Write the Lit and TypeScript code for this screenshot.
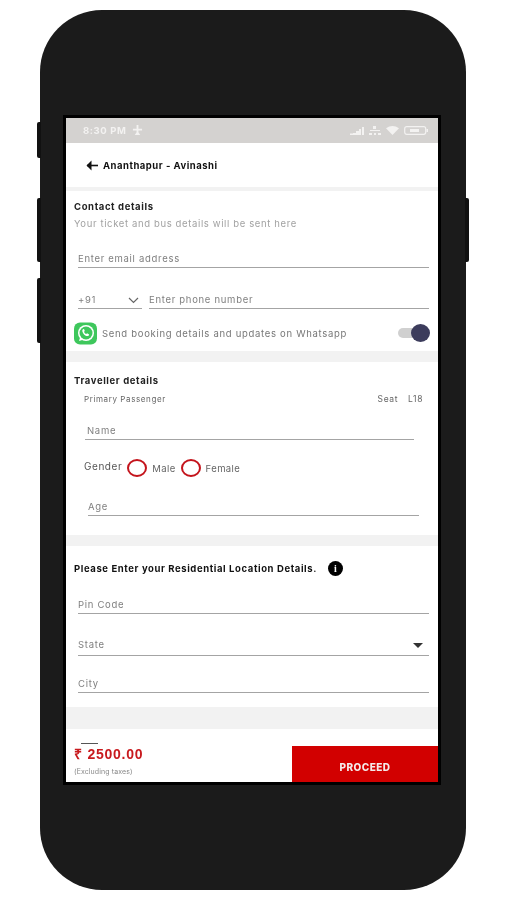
import { LitElement, html, css } from "lit";
import { customElement } from "lit/decorators.js";

@customElement("app-root")
export class AppRoot extends LitElement {
  static styles = css`
    :host { display: block; width: 506px; height: 900px; background: #fff; padding-top: 10px; box-sizing: border-box; font-family: Inter, "Open Sans", "Liberation Sans", sans-serif; overflow: hidden; }
    * { box-sizing: border-box; }
    .phone { position: relative; width: 426px; height: 880px; margin-left: 40px; background: #1b1b1b; border-radius: 62px; padding: 105px 25px 105px 23px; filter: blur(0.5px); }
    .btn { position: absolute; width: 4px; background: #111; }
    .l1 { left: -3px; top: 112px; height: 36px; border-radius: 2px 0 0 2px; }
    .l2 { left: -3px; top: 188px; height: 64px; border-radius: 2px 0 0 2px; }
    .l3 { left: -3px; top: 268px; height: 65px; border-radius: 2px 0 0 2px; }
    .r1 { right: -3px; top: 188px; height: 64px; border-radius: 0 2px 2px 0; }
    .screen { width: 378px; height: 670px; border: 3px solid #000; background: #f2f2f2; display: flex; flex-direction: column; overflow: hidden; }
    .status { height: 25px; background: #d4d2d0; display: flex; align-items: center; padding: 0 10px 0 17px; color: #f3f2f1; font-size: 9.5px; font-weight: 700; flex: none; }
    .status .time { margin-right: 6px; letter-spacing: .6px; }
    .status .right { margin-left: auto; display: flex; align-items: center; gap: 5px; }
    .head { height: 44px; background: #fff; display: flex; align-items: center; padding-left: 20px; gap: 5px; font-size: 9.5px; font-weight: 700; color: #111; flex: none; margin-bottom: 4px; letter-spacing: .5px; }
    .sec { background: #fff; flex: none; padding-left: 8px; }
    .contact { height: 160px; margin-bottom: 11px; padding-top: 9px; }
    .traveller { height: 173px; margin-bottom: 11px; padding-top: 12px; }
    .resid { height: 161px; margin-bottom: 22px; padding-top: 14px; }
    h3 { margin: 0; font-size: 9.5px; line-height: 14px; font-weight: 700; color: #222; letter-spacing: .62px; }
    .sub { font-size: 9.5px; line-height: 14px; color: #a2a2a2; margin-top: 3px; letter-spacing: .63px; }
    .field { height: 17px; border-bottom: 1px solid #a4a4a4; font-size: 9.5px; line-height: 14px; color: #7f7f7f; letter-spacing: .7px; display: flex; justify-content: space-between; align-items: flex-start; padding-top: 1px; }
    .email { margin: 20px 9px 0 4px; }
    .phone-row { display: flex; gap: 7px; margin: 24px 9px 0 4px; }
    .code { width: 64px; padding-right: 3px; }
    .grow { flex: 1; }
    .wa { display: flex; align-items: center; margin-top: 12px; height: 24px; padding-right: 8px; font-size: 9.5px; color: #777; letter-spacing: .7px; }
    .wa span { margin-left: 5px; }
    .toggle { position: relative; margin-left: auto; width: 32px; height: 16px; }
    .track { position: absolute; left: 0; top: 3px; width: 24px; height: 10px; border-radius: 5px; background: #d0d0d0; }
    .knob { position: absolute; right: 0; top: -1px; border-radius: 50%; background: #3c3c5c; width: 19px; height: 18px; }
    .pp { display: flex; padding: 5px 15px 0 10px; font-size: 8px; line-height: 12px; color: #666; letter-spacing: .6px; }
    .pp .seat { margin-left: auto; margin-right: 10px; font-size: 8.5px; }
    .pp .no { font-size: 8.5px; }
    .name { margin: 18px 24px 0 11px; padding-left: 2px; }
    .gender { display: flex; align-items: center; margin: 16px 0 0 10px; height: 24px; font-size: 9.5px; color: #666; letter-spacing: .4px; }
    .gender b { font-weight: 400; margin: -4px 5px 0 0; color: #555; font-size: 10px; letter-spacing: .55px; }
    .radio { width: 20px; height: 18px; border: 2px solid #c4141c; border-radius: 50%; margin-right: 5px; }
    .gender .m { margin-right: 5px; }
    .age { margin: 19px 19px 0 14px; }
    .rt { display: flex; align-items: center; height: 16px; font-size: 9.5px; font-weight: 700; color: #111; letter-spacing: .6px; }
    .info { width: 15px; height: 15px; border-radius: 50%; background: #000; color: #fff; font-size: 10px; font-weight: 700; line-height: 15px; text-align: center; margin-left: 11px; font-family: "Liberation Serif", serif; letter-spacing: 0; }
    .pin { margin: 21px 9px 0 4px; }
    .state { margin: 23px 9px 0 4px; height: 19px; padding-right: 6px; }
    .caret { width: 0; height: 0; margin-top: 5px; border: 5px solid transparent; border-top: 5px solid #333; border-bottom: 0; }
    .city { margin: 20px 9px 0 4px; }
    .foot { flex: 1; background: #fff; display: flex; justify-content: space-between; align-items: flex-end; padding-left: 8px; }
    .price { align-self: stretch; padding-top: 14px; }
    .dash { width: 17px; height: 1px; background: #555; margin-left: 7px; }
    .amt { color: #c81a1e; font-size: 14px; line-height: 18px; font-weight: 700; letter-spacing: .75px; margin-top: 1px; font-family: "Liberation Sans", sans-serif; }
    .tax { font-size: 7px; line-height: 10px; color: #888; margin-top: 4px; letter-spacing: .1px; }
    .cta { width: 146px; height: 36px; background: #d20000; color: #f4eaea; font-size: 10px; font-weight: 800; display: flex; align-items: flex-end; justify-content: center; padding-bottom: 9px; letter-spacing: .45px; }
  `;

  render() {
    return html`
      <div class="phone">
        <i class="btn l1"></i><i class="btn l2"></i><i class="btn l3"></i><i class="btn r1"></i>
        <div class="screen">
          <div class="status">
            <span class="time">8:30 PM</span>
            <svg width="11" height="11" viewBox="0 0 12 12" fill="#f3f2f1"><path d="M5 0h2v4h4v2H7v2l2 3H3l2-3V6H1V4h4z"/></svg>
            <div class="right">
              <svg width="14" height="8" viewBox="0 0 14 8" fill="#f3f2f1"><rect x="0" y="6.5" width="3" height="1.5"/><rect x="3" y="6" width="3" height="2"/><rect x="6" y="4" width="3" height="4"/><rect x="9" y="2" width="2" height="6"/><rect x="12" y="0" width="2" height="8"/></svg>
              <svg width="12" height="9" viewBox="0 0 12 9" fill="#f3f2f1"><path d="M4 0h3v3H4zM1 4h10v1H1zM0 7h3v2H0zM5 7h2v2H5zM9 7h3v2H9z"/></svg>
              <svg width="13" height="9" viewBox="0 0 13 9" fill="#f3f2f1"><path d="M0 2.2Q6.5-2 13 2.2L6.5 9z"/></svg>
              <svg width="24" height="9" viewBox="0 0 24 9"><rect x=".7" y=".7" width="21" height="7.6" rx="2" fill="none" stroke="#f3f2f1" stroke-width="1.2"/><rect x="22.5" y="3" width="1.5" height="3" fill="#f3f2f1"/><rect x="6" y="3" width="9" height="3" fill="#f3f2f1"/></svg>
            </div>
          </div>
          <div class="head">
            <svg width="12" height="11" viewBox="0 0 12 11"><path d="M5.5 0.5 0.5 5.5l5 5" fill="#111"/><path d="M1 5.5h11" stroke="#111" stroke-width="1.6"/></svg>
            Ananthapur - Avinashi
          </div>
          <div class="sec contact">
            <h3>Contact details</h3>
            <div class="sub">Your ticket and bus details will be sent here</div>
            <div class="field email">Enter email address</div>
            <div class="phone-row">
              <div class="field code">+91
                <svg width="11" height="7" viewBox="0 0 11 7" style="margin-top:4px"><path d="M1 1l4.5 4.5L10 1" fill="none" stroke="#666" stroke-width="1.2"/></svg>
              </div>
              <div class="field grow">Enter phone number</div>
            </div>
            <div class="wa">
              <svg width="23" height="23" viewBox="0 0 23 23">
                <rect x="0" y="0.5" width="23" height="22" rx="6" fill="#3ec75c"/>
                <circle cx="12" cy="11" r="8" fill="#fff"/>
                <path d="M5 19l1.5-5 3.5 3.5z" fill="#fff"/>
                <circle cx="12" cy="11" r="6.5" fill="#3ec75c"/>
                <path d="M9 7.2c-1 .8-1 2.3.3 4.2 1.4 2 3.2 3 4.6 2.6.8-.2 1.2-1 1.2-1.6l-2-1.1-.9.8c-.9-.4-1.8-1.4-2.2-2.4l.8-.8-.8-2z" fill="#fff"/>
              </svg>
              <span>Send booking details and updates on Whatsapp</span>
              <div class="toggle"><div class="track"></div><div class="knob"></div></div>
            </div>
          </div>
          <div class="sec traveller">
            <h3>Traveller details</h3>
            <div class="pp"><span>Primary Passenger</span><span class="seat">Seat</span><span class="no">L18</span></div>
            <div class="field name">Name</div>
            <div class="gender">
              <b>Gender</b><div class="radio"></div><span class="m">Male</span><div class="radio"></div><span>Female</span>
            </div>
            <div class="field age">Age</div>
          </div>
          <div class="sec resid">
            <div class="rt">Please Enter your Residential Location Details.<span class="info">i</span></div>
            <div class="field pin">Pin Code</div>
            <div class="field state">State<i class="caret"></i></div>
            <div class="field city">City</div>
          </div>
          <div class="foot">
            <div class="price">
              <div class="dash"></div>
              <div class="amt">₹ 2500.00</div>
              <div class="tax">(Excluding taxes)</div>
            </div>
            <div class="cta">PROCEED</div>
          </div>
        </div>
      </div>
    `;
  }
}
